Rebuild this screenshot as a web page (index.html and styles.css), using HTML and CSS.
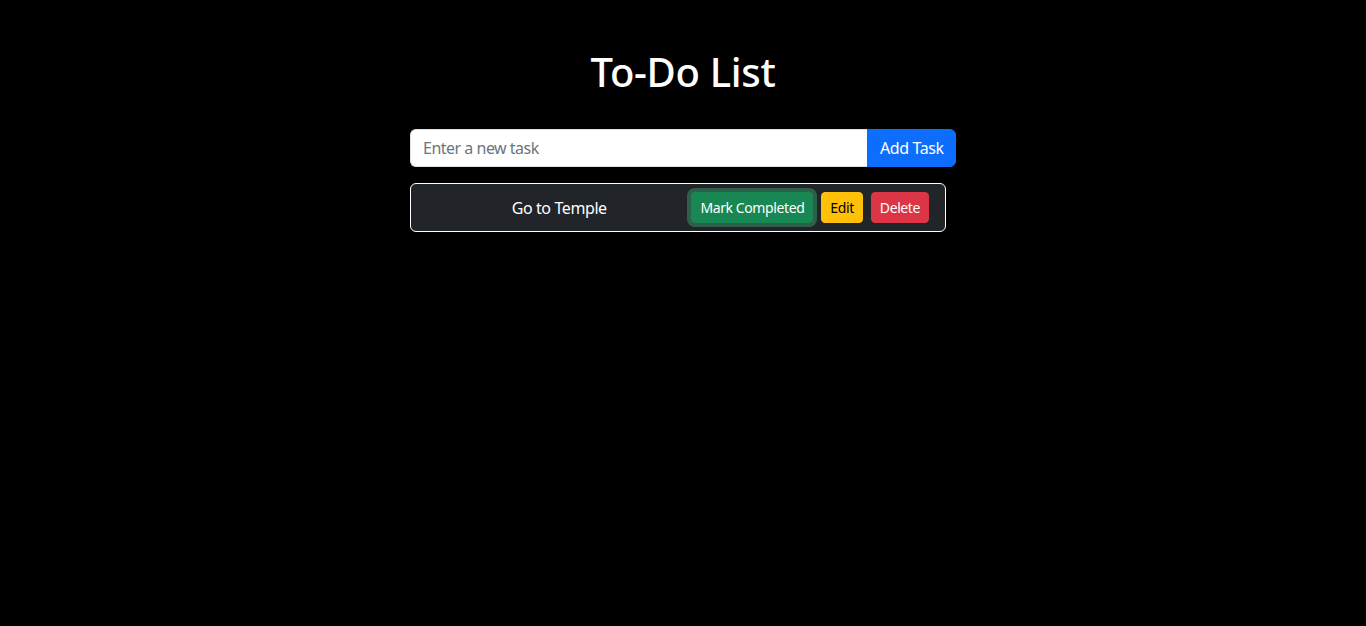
FILE: index.html
```html
<!DOCTYPE html>
<html lang="en">
<head>
<meta charset="utf-8">
<title>To-Do List</title>
<link rel="stylesheet" href="styles.css">
</head>
<body>
<main class="container">
  <h1 class="title">To-Do List</h1>
  <div class="input-group">
    <input class="task-input" type="text" placeholder="Enter a new task">
    <button class="btn btn-add">Add Task</button>
  </div>
  <ul class="task-list">
    <li class="task-item">
      <span class="task-text">Go to Temple</span>
      <button class="btn btn-sm btn-success focused">Mark Completed</button>
      <button class="btn btn-sm btn-warning">Edit</button>
      <button class="btn btn-sm btn-danger">Delete</button>
    </li>
  </ul>
</main>
</body>
</html>
```

FILE: styles.css
```css
* { box-sizing: border-box; }
html, body { margin: 0; padding: 0; }
body {
  background: #000;
  color: #fff;
  font-family: "Noto Sans", "Open Sans", sans-serif;
  font-size: 16px;
  line-height: 1.5;
  letter-spacing: -0.4px;
}
.container {
  width: 546px;
  margin: 0 auto;
  padding-top: 48px;
}
.title {
  margin: 0 0 33px;
  font-size: 40px;
  font-weight: 500;
  line-height: 48px;
  text-align: center;
  letter-spacing: -0.3px;
}
.input-group {
  display: flex;
  height: 38px;
  margin-bottom: 16px;
}
.task-input {
  flex: 1;
  min-width: 0;
  border: 1px solid #dee2e6;
  border-right: none;
  border-radius: 6px 0 0 6px;
  padding: 6px 12px;
  font: inherit;
  letter-spacing: -0.5px;
  color: #212529;
  background: #fff;
}
.task-input::placeholder { color: #6c757d; }
.btn {
  font: inherit;
  letter-spacing: inherit;
  border: 1px solid transparent;
  white-space: nowrap;
  cursor: pointer;
}
.btn-add {
  width: 89px;
  padding: 6px 12px;
  background: #0d6efd;
  border-color: #0d6efd;
  color: #fff;
  border-radius: 0 6px 6px 0;
}
.task-list {
  list-style: none;
  margin: 0;
  padding: 0;
  width: 536px;
}
.task-item {
  display: flex;
  align-items: center;
  gap: 8px;
  padding: 8px 16px;
  background: #212529;
  border: 1px solid #fff;
  border-radius: 6px;
}
.task-text {
  flex: 1;
  padding-left: 8px;
  text-align: center;
}
.btn-sm {
  font-size: 14px;
  line-height: 21px;
  padding: 4px 8px;
  border-radius: 4px;
}
.btn-success { background: #198754; border-color: #198754; color: #fff; }
.btn-warning { background: #ffc107; border-color: #ffc107; color: #000; }
.btn-danger { background: #dc3545; border-color: #dc3545; color: #fff; }
.focused { box-shadow: 0 0 0 4px rgba(60, 153, 110, 0.5); }
```
